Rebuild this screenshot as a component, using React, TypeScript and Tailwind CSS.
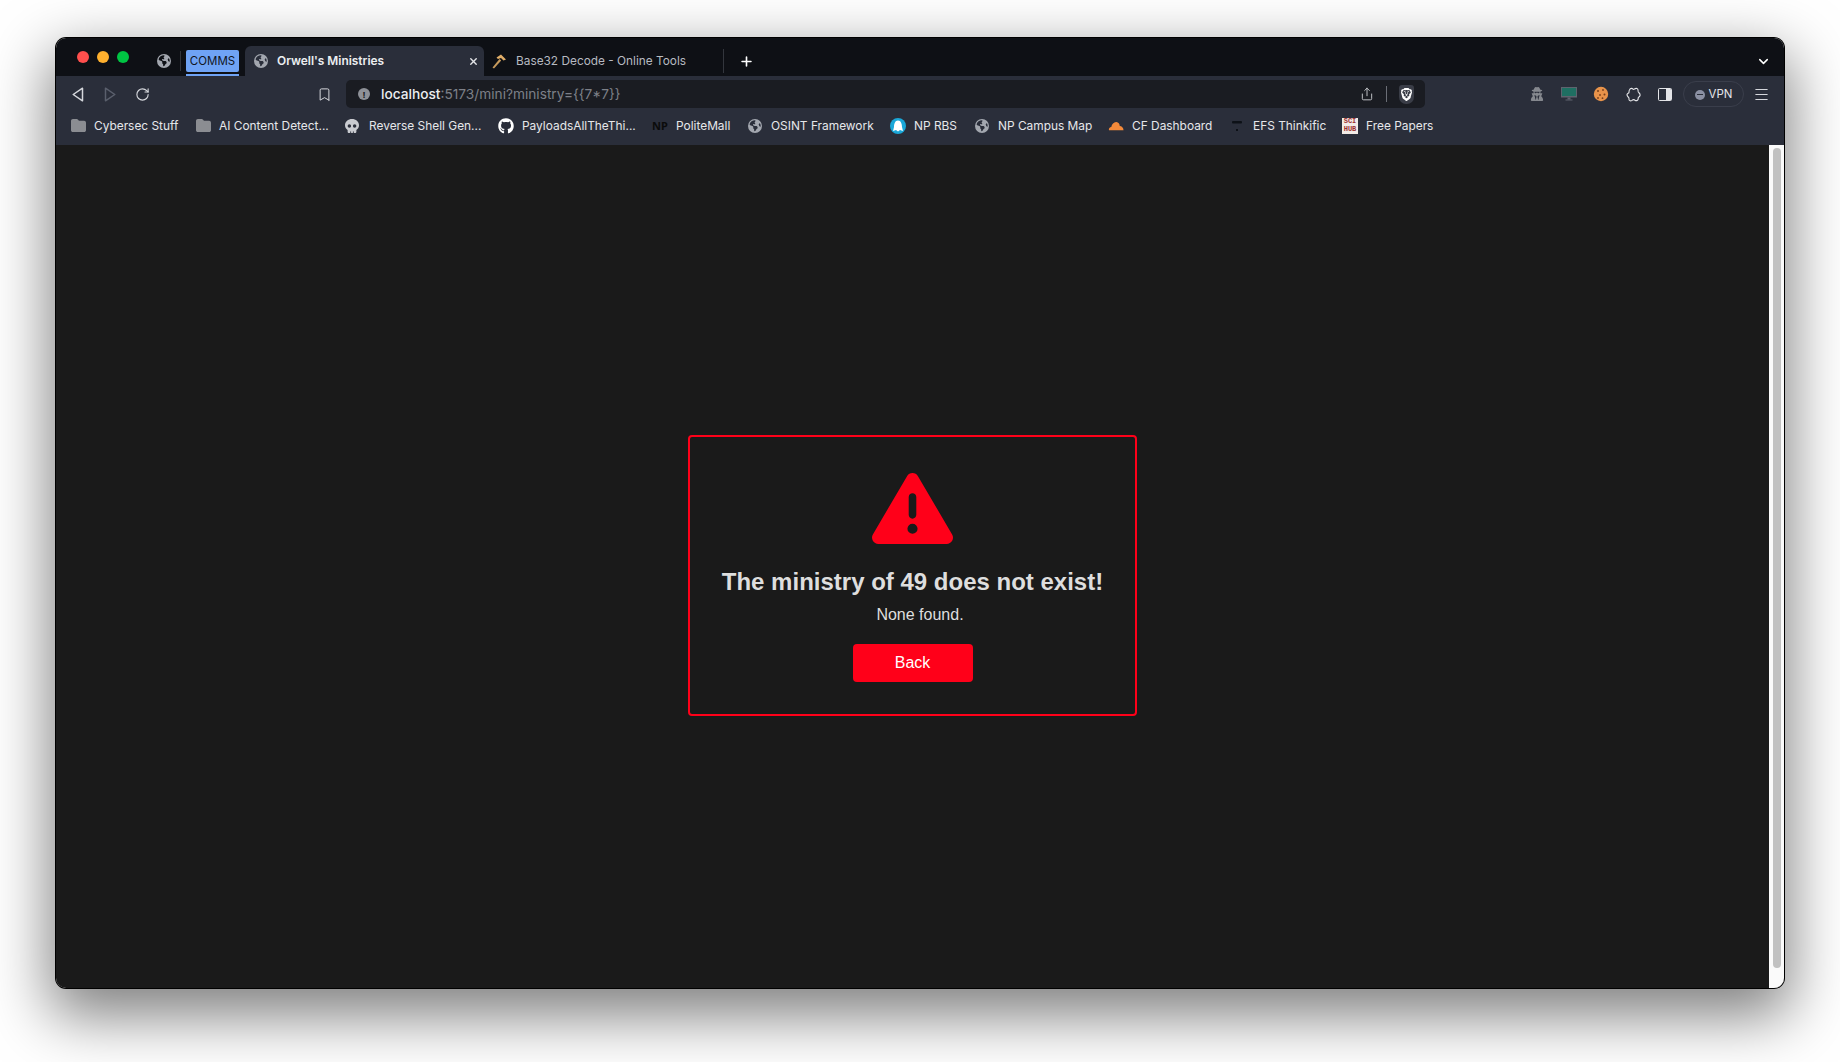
import { FaTriangleExclamation, FaEarthAmericas, FaGithub, FaSkull, FaFolder, FaUserSecret, FaPlus, FaXmark } from "react-icons/fa6"
import { SiBrave } from "react-icons/si"
import { ChevronDown, RotateCw, Bookmark, Share, Menu } from "lucide-react"
import type { ReactNode } from "react"

function Globe({ className = "" }: { className?: string }) {
  return <FaEarthAmericas size={14} className={`text-[#a3a7af] ${className}`} />
}

function BackArrow({ muted = false, flip = false }: { muted?: boolean; flip?: boolean }) {
  return (
    <svg width="12" height="15" viewBox="0 0 12 15" fill="none" className={flip ? "rotate-180" : ""}>
      <path
        d="M10.5 1.2 L1.2 7.5 L10.5 13.8 Z"
        stroke={muted ? "#5a5f6c" : "#d5d7dc"}
        strokeWidth="1.5"
        strokeLinejoin="round"
      />
    </svg>
  )
}

function Hammer() {
  return (
    <svg width="16" height="16" viewBox="0 0 16 16">
      <path d="M1.5 14.5 L8.5 6 L10.2 7.4 L3 15.6 Z" fill="#c79a5c" />
      <path d="M5.5 4.5 L10 1.5 L15 6.5 L12.5 7.5 L10 5 L7 6 Z" fill="#e0ad68" />
    </svg>
  )
}

function Cookie() {
  return (
    <svg width="16" height="16" viewBox="0 0 16 16">
      <circle cx="8" cy="8" r="7.2" fill="#e8934a" />
      <circle cx="5" cy="5" r="1" fill="#7a3f1a" />
      <circle cx="10" cy="4" r="0.9" fill="#7a3f1a" />
      <circle cx="11.5" cy="8.5" r="1" fill="#7a3f1a" />
      <circle cx="7" cy="9" r="0.9" fill="#7a3f1a" />
      <circle cx="5" cy="12" r="0.9" fill="#7a3f1a" />
      <circle cx="9.5" cy="12.2" r="0.9" fill="#7a3f1a" />
    </svg>
  )
}

function Monitor() {
  return (
    <svg width="16" height="14" viewBox="0 0 16 14">
      <rect x="0" y="0" width="16" height="10.5" fill="#5e636e" />
      <rect x="1" y="1" width="14" height="8" fill="#1f6f62" />
      <rect x="6.5" y="10.5" width="3" height="2" fill="#5e636e" />
      <rect x="4.5" y="12.5" width="7" height="1" fill="#5e636e" />
    </svg>
  )
}

function PuzzleBlob() {
  return (
    <svg width="15" height="15" viewBox="0 0 15 15" fill="none">
      <path
        d="M3.5 2.8 C4.5 0.9 6.2 1 7 2.2 C8 3.1 9 0.7 11 1.6 C12.7 2.4 11.8 4 12.3 5 C13 6 14.6 6.6 14 8.6 C13.5 10.3 12 9.8 12.2 11.3 C12.4 13.4 10.4 14.2 9 13.2 C8 12.4 7.2 12.4 6 13.4 C4.4 14.5 2.6 13.6 3 11.4 C3.2 10.2 0.7 9.6 1 7.6 C1.3 6 3 6.6 3 5.2 C3 4.2 3 3.6 3.5 2.8 Z"
        stroke="#e4e5e8"
        strokeWidth="1.1"
      />
    </svg>
  )
}

function SidebarToggle() {
  return (
    <div className="flex h-[13px] w-[14px] overflow-hidden rounded-[1.5px] border border-[#e4e5e8]">
      <div className="flex-1" />
      <div className="w-[5px] bg-[#e4e5e8]" />
    </div>
  )
}

function RbsIcon() {
  return (
    <svg width="16" height="16" viewBox="0 0 16 16">
      <circle cx="8" cy="8" r="8" fill="#1aa7d8" />
      <path d="M8 2.5 C11 2.5 12 6 12 9 L13 13 L10 12 L8 13.5 L6 12 L3 13 L4 9 C4 6 5 2.5 8 2.5 Z" fill="#fff" />
    </svg>
  )
}

function CloudflareIcon() {
  return (
    <svg width="17" height="10" viewBox="0 0 17 10">
      <path d="M1 9.5 C0.5 7.5 2 6 3.5 6 C4 3 6.5 0.5 9 0.8 C11 1 12.5 3 12.5 5 C14.5 5 16.5 7 16.5 9.5 Z" fill="#f48a3a" />
    </svg>
  )
}

function EfsIcon() {
  return (
    <svg width="12" height="14" viewBox="0 0 12 14">
      <rect x="1" y="2" width="10" height="2.5" rx="1" fill="#0d1117" />
      <rect x="5" y="10" width="2" height="2" fill="#0d1117" />
    </svg>
  )
}

function SciHubIcon() {
  return (
    <div className="flex h-[16px] w-[16px] flex-col items-center justify-center bg-[#f2ebe6] font-['Liberation_Mono',monospace] text-[7px] font-bold leading-[7.5px] text-[#9c2f2f]">
      <span>SCI</span>
      <span>HUB</span>
    </div>
  )
}

interface BookmarkItem {
  icon: ReactNode
  label: string
  width: string
  gap?: string
}

const bookmarks: BookmarkItem[] = [
  { icon: <FaFolder size={15} className="text-[#8b8d92]" />, label: "Cybersec Stuff", width: "w-[125px]" },
  { icon: <FaFolder size={15} className="text-[#8b8d92]" />, label: "AI Content Detect...", width: "w-[149px]" },
  { icon: <FaSkull size={14} className="text-[#c9cbd0]" />, label: "Reverse Shell Gen...", width: "w-[154px]", gap: "ml-[9px]" },
  { icon: <FaGithub size={16} className="text-white" />, label: "PayloadsAllTheThi...", width: "w-[154px]", gap: "ml-[8px]" },
  { icon: <span className="text-[11px] font-bold text-[#0b0b0b]">NP</span>, label: "PoliteMall", width: "w-[95px]" },
  { icon: <Globe />, label: "OSINT Framework", width: "w-[143px]" },
  { icon: <RbsIcon />, label: "NP RBS", width: "w-[84px]" },
  { icon: <Globe />, label: "NP Campus Map", width: "w-[134px]" },
  { icon: <CloudflareIcon />, label: "CF Dashboard", width: "w-[121px]" },
  { icon: <EfsIcon />, label: "EFS Thinkific", width: "w-[113px]" },
  { icon: <SciHubIcon />, label: "Free Papers", width: "w-auto", gap: "ml-[8px]" },
]

function TabStrip() {
  return (
    <div className="flex h-[38px] shrink-0 items-end bg-[#0e1015]">
      <div className="ml-[21px] flex h-full w-[80px] items-center gap-2">
        <span className="h-3 w-3 rounded-full bg-[#ff4f4d]" />
        <span className="h-3 w-3 rounded-full bg-[#ffb02e]" />
        <span className="h-3 w-3 rounded-full bg-[#00c543]" />
      </div>
      <div className="flex h-[30px] w-[23px] items-center pb-[1px]">
        <Globe />
      </div>
      <div className="mb-[5px] h-[20px] w-px bg-[#33363d]" />
      <div className="ml-[5px] flex h-[26px] w-[53px] flex-col justify-between self-end">
        <div className="flex h-[22px] items-center justify-center rounded-[2px] bg-[#6fa3f5] pt-[1px] font-['Inter',sans-serif] text-[11.5px] text-[#11151c]">
          COMMS
        </div>
        <div className="h-[2px] bg-[#6fa3f5]" />
      </div>
      <div className="ml-[6px] flex h-[30px] w-[239px] items-center rounded-t-[6px] bg-[#2a2e3a] pl-[9px] pr-[5px]">
        <Globe />
        <span className="ml-[9px] font-['Inter',sans-serif] text-[11.9px] font-semibold text-[#eceef1]">
          Orwell's Ministries
        </span>
        <FaXmark size={11} className="ml-auto text-[#e4e5e8]" />
      </div>
      <div className="flex h-[30px] w-[239px] items-center pl-[7px]">
        <Hammer />
        <span className="ml-[9px] pt-[1px] font-['Inter',sans-serif] text-[11.85px] text-[#b7bac1]">
          Base32 Decode - Online Tools
        </span>
      </div>
      <div className="mb-[3px] h-[24px] w-px bg-[#33363d]" />
      <div className="flex h-[30px] w-[44px] items-center justify-center">
        <FaPlus size={13} className="text-white" />
      </div>
      <div className="flex h-[30px] flex-1 items-center justify-end pr-[13px]">
        <ChevronDown size={15} strokeWidth={2.4} className="text-white" />
      </div>
    </div>
  )
}

function Toolbar() {
  return (
    <div className="flex h-[36px] shrink-0 items-center bg-[#2a2e3a]">
      <div className="ml-[16px] flex w-[63px] items-center gap-[20px]">
        <BackArrow />
        <BackArrow muted flip />
      </div>
      <RotateCw size={15} strokeWidth={1.8} className="text-[#d5d7dc]" />
      <Bookmark size={15} strokeWidth={1.6} className="ml-[167px] text-[#d5d7dc]" />
      <div className="ml-[14px] flex h-[28px] w-[1079px] items-center rounded-[5px] bg-[#1a1c22] pl-[12px] pr-[11px]">
        <span className="flex h-[12px] w-[12px] items-center justify-center rounded-full bg-[#8e9198] text-[9px] font-bold leading-none text-[#1a1c22]">
          !
        </span>
        <span className="ml-[11px] font-['Inter',sans-serif] text-[13.7px] font-medium text-[#eceef1]">
          localhost<span className="font-normal text-[#7d8088]">:5173/mini?ministry={"{{7*7}}"}</span>
        </span>
        <div className="ml-auto flex items-center">
          <Share size={14} strokeWidth={1.6} className="text-[#c9cbd0]" />
          <div className="ml-[12px] h-[16px] w-px bg-[#6b6e76]" />
          <div className="ml-[12px] flex h-[19px] w-[15px] items-center justify-center rounded-b-[7px] rounded-t-[3px] bg-[#3a3d47]">
            <SiBrave size={13} className="text-white" />
          </div>
        </div>
      </div>
      <div className="ml-[105px] flex items-center">
        <FaUserSecret size={14} className="text-[#85888e]" />
        <div className="ml-[17px]">
          <Monitor />
        </div>
        <div className="ml-[16px]">
          <Cookie />
        </div>
        <div className="ml-[17px]">
          <PuzzleBlob />
        </div>
        <div className="ml-[17px]">
          <SidebarToggle />
        </div>
        <div className="ml-[11px] flex h-[26px] w-[61px] items-center justify-center gap-[4px] rounded-full border border-[#3a3e4b] pt-[1px] font-['Inter',sans-serif] text-[11.5px] text-[#e4e5e8]">
          <span className="flex h-[10px] w-[10px] items-center justify-center rounded-full bg-[#8b90a3]">
            <span className="h-[1.5px] w-[6px] bg-[#2a2e3a]" />
          </span>
          VPN
        </div>
        <Menu size={17} strokeWidth={1.6} className="ml-[9px] text-[#d5d7dc]" />
      </div>
    </div>
  )
}

function BookmarksBar() {
  return (
    <div className="flex h-[33px] shrink-0 items-center bg-[#2a2e3a] pb-[5px] pl-[14px]">
      {bookmarks.map((b) => (
        <div key={b.label} className={`flex items-center ${b.width}`}>
          <span className="flex w-[16px] justify-center">{b.icon}</span>
          <span className={`${b.gap ?? "ml-[8px]"} whitespace-nowrap font-['Inter',sans-serif] text-[11.9px] text-[#e6e7ea]`}>
            {b.label}
          </span>
        </div>
      ))}
    </div>
  )
}

function ErrorCard() {
  return (
    <div className="flex h-[281px] w-[449px] flex-col items-center rounded-[4px] border-2 border-[#ff0019] pt-[31px] font-['Liberation_Sans',Arial,sans-serif]">
      <FaTriangleExclamation size={81} className="text-[#ff0019]" />
      <h1 className="mt-[17px] text-[24px] font-bold leading-[32px] text-[#dedede]">
        The ministry of 49 does not exist!
      </h1>
      <p className="ml-[15px] mt-[5px] text-[16px] leading-[24px] text-[#dedede]">None found.</p>
      <button className="mt-[17px] h-[38px] w-[120px] rounded-[4px] bg-[#ff0019] text-[16px] text-white">
        Back
      </button>
    </div>
  )
}

export default function App() {
  return (
    <div className="h-[1062px] w-[1840px] overflow-hidden bg-white pb-[74px] pl-[56px] pr-[56px] pt-[38px]">
      <div className="flex h-full flex-col overflow-hidden rounded-[10px] shadow-[0_0_0_1px_#000,0_22px_60px_6px_rgba(0,0,0,0.5)]">
        <TabStrip />
        <Toolbar />
        <BookmarksBar />
        <div className="flex min-h-0 flex-1 bg-[#1a1a1a]">
          <main className="flex flex-1 items-center justify-center pt-[17px]">
            <ErrorCard />
          </main>
          <div className="flex w-[15px] justify-center bg-[#fafafa] pb-[20px] pt-[3px]">
            <div className="h-full w-[8px] rounded-full bg-[#c1c1c1]" />
          </div>
        </div>
      </div>
    </div>
  )
}
